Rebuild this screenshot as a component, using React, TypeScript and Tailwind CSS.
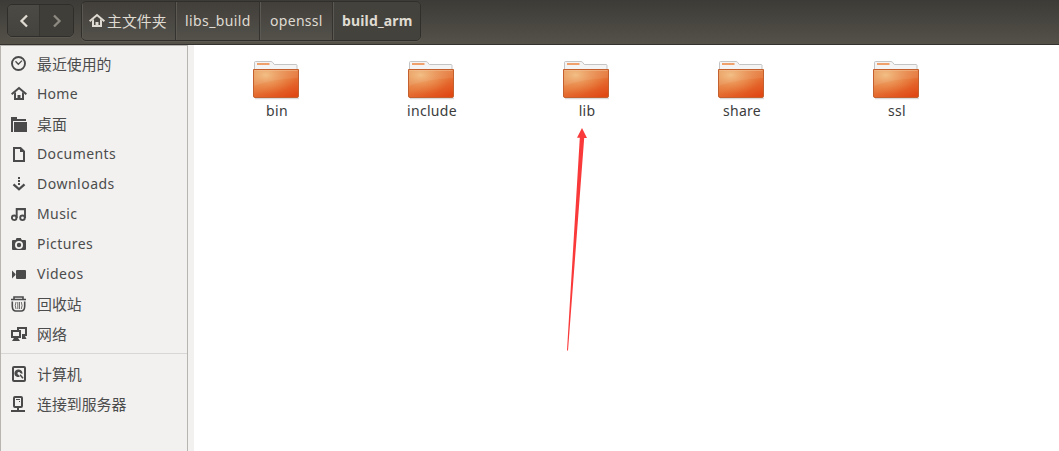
import React from 'react';

const FONT = "font-['Noto_Sans','Noto_Sans_CJK_SC',sans-serif]";

// 16px symbolic icons, drawn with the current text colour
const icons: Record<string, React.ReactNode> = {
    recent: (
        <g fill="none" stroke="currentColor">
            <circle cx="7.5" cy="7.5" r="6.5" strokeWidth="1.9" />
            <path d="M4.5 5.2 7.3 8.3 11 4.6" strokeWidth="1.3" />
        </g>
    ),
    home: (
        <g>
            <path d="M.6 8.3 8 2l7.4 6.3" fill="none" stroke="currentColor" strokeWidth="2" />
            <path d="M3 7.5 5 6v6h1.500V9h3v3H11V6l2 1.500V14H3z" fill="currentColor" />
        </g>
    ),
    desktop: (
        <g fill="currentColor">
            <path d="M0 1h6v2h9v2H2v11H0z" />
            <path d="M3 6h13v10H3z" />
        </g>
    ),
    documents: (
        <g>
            <path d="M3 2h6.5L13 5.5V15H3z" fill="none" stroke="currentColor" strokeWidth="2" />
            <path d="M9 2v4h4z" fill="currentColor" />
        </g>
    ),
    downloads: (
        <g>
            <path d="M7 1h2v2H7zM7 4h2v2H7zM7 7h2v2H7z" fill="currentColor" />
            <path d="m2.5 8.3 5.5 5 5.5-5" fill="none" stroke="currentColor" strokeWidth="2.3" />
        </g>
    ),
    music: (
        <g fill="none" stroke="currentColor" strokeWidth="1.9">
            <circle cx="3.2" cy="11.8" r="2.3" />
            <circle cx="11.5" cy="11.8" r="2.3" />
            <path d="M5.7 12V3H14v9M5.7 3.3h8.2" />
        </g>
    ),
    pictures: (
        <g>
            <path
                fillRule="evenodd"
                d="M5.5 2h4.3l1 2H14q1 0 1 1v8q0 1-1 1H2q-1 0-1-1V5q0-1 1-1h2.7zM8 5a4 4 0 1 0 0 8 4 4 0 0 0 0-8z"
                fill="currentColor"
            />
            <circle cx="8" cy="9" r="2.2" fill="currentColor" />
        </g>
    ),
    videos: (
        <g fill="currentColor">
            <rect x="5" y="4" width="10" height="9" rx="1" />
            <path d="M1 4.5 4.5 8v1L1 12.5z" />
        </g>
    ),
    trash: (
        <g fill="none" stroke="currentColor">
            <path d="M0 3.5h15M3 3.500V1h9v2.500" strokeWidth="1.6" />
            <path d="M1.3 5.5v5q.3 4.500 3.500 4.500h5.400q3.200 0 3.500-4.500v-5" strokeWidth="1.6" />
            <path d="M5 6Q3.500 9.500 5 13M6.800 6v7M8.500 6v7M10.300 6q1.500 3.500 0 7" strokeWidth=".8" />
        </g>
    ),
    network: (
        <g>
            <path d="M7 4V2h8v7h-4" fill="none" stroke="currentColor" strokeWidth="2" />
            <path d="M11 10h3l1.5 3H11z" fill="currentColor" />
            <path d="M1 5h8v6H1z" fill="none" stroke="currentColor" strokeWidth="2" />
            <path d="M3 12h4l2 3H1z" fill="currentColor" />
        </g>
    ),
    computer: (
        <g>
            <rect x="2" y="1" width="12" height="14" rx="1" fill="none" stroke="currentColor" strokeWidth="2" />
            <path fillRule="evenodd" d="M8 3.5a4 3.8 0 1 0 .8 7.3L7.500 8.700A1.400 1.400 0 1 1 9.200 7l2.200 1A4 3.800 0 0 0 8 3.500z" fill="currentColor" />
            <path d="m9 8.8 3 3.5" stroke="currentColor" strokeWidth="1.5" />
        </g>
    ),
    server: (
        <g>
            <rect x="3" y="1" width="8" height="10" rx="1" fill="none" stroke="currentColor" strokeWidth="2" />
            <path d="M5 3h4v1H5zM8 5h1v1H8zM6 11h2v3H6zM0 14h14v2H0z" fill="currentColor" />
        </g>
    ),
};

const Icon: React.FC<{ name: string; className?: string }> = ({ name, className = '' }) => (
    <svg viewBox="0 0 16 16" className={`h-4 w-4 shrink-0 ${className}`}>
        {icons[name]}
    </svg>
);

const places = [
    { icon: 'recent', label: '最近使用的', text: 'text-[14.9px]' },
    { icon: 'home', label: 'Home', text: 'text-[14px] tracking-[0.25px]' },
    { icon: 'desktop', label: '桌面', text: 'text-[14.9px]' },
    { icon: 'documents', label: 'Documents', text: 'text-[14px] tracking-[0.4px]' },
    { icon: 'downloads', label: 'Downloads', text: 'text-[14px] tracking-[0.5px]' },
    { icon: 'music', label: 'Music', text: 'text-[14px] tracking-[0.4px]' },
    { icon: 'pictures', label: 'Pictures', text: 'text-[14px] tracking-[0.45px]' },
    { icon: 'videos', label: 'Videos', text: 'text-[14px] tracking-[0.5px]' },
    { icon: 'trash', label: '回收站', text: 'text-[14.9px]' },
    { icon: 'network', label: '网络', text: 'text-[14.9px]' },
];

const devices = [
    { icon: 'computer', label: '计算机', text: 'text-[14.9px]' },
    { icon: 'server', label: '连接到服务器', text: 'text-[14.9px]' },
];

const folders = ['bin', 'include', 'lib', 'share', 'ssl'];

const PlaceRow: React.FC<{ icon: string; label: string; text: string }> = ({ icon, label, text }) => (
    <li className="flex h-[30px] items-center gap-2.5 pl-2.5">
        <Icon name={icon} className="text-[#4a4a4a]" />
        <span className={`whitespace-nowrap leading-none text-[#4c4c4c] ${text}`}>{label}</span>
    </li>
);

const FolderIcon: React.FC<{ id: string }> = ({ id }) => (
    <svg viewBox="0 0 50 42" className="h-[42px] w-[50px]">
        <defs>
            <linearGradient id={`front-${id}`} x1=".2" y1="0" x2=".8" y2="1">
                <stop offset="0" stopColor="#e58f50" />
                <stop offset=".5" stopColor="#e67437" />
                <stop offset="1" stopColor="#e04814" />
            </linearGradient>
            <radialGradient id={`glow-${id}`} cx=".27" cy=".2" r=".7">
                <stop offset="0" stopColor="#f4c88a" stopOpacity=".8" />
                <stop offset="1" stopColor="#ec9454" stopOpacity="0" />
            </radialGradient>
        </defs>
        <path d="M3 39.5h44" stroke="#000" strokeOpacity=".15" strokeWidth="1.5" />
        <path d="M2.5 12V3.5q0-1 1-1H19q1 0 1.6.8l1.700 2.200H44q1 0 1 1V12z" fill="#f4f4f4" stroke="#c4c4c4" />
        <path d="M5 5h12.5" stroke="#f0a06a" strokeWidth="2" />
        <path d="M1.5 10.5h45V37q0 1.5-1.5 1.5H3q-1.5 0-1.5-1.5z" fill={`url(#front-${id})`} />
        <path d="M1.5 10.5h45V37q0 1.5-1.5 1.5H3q-1.5 0-1.5-1.5z" fill={`url(#glow-${id})`} stroke="#c4602e" />
        <path d="M2 11h44v8Q20 20 2 27z" fill="#fff" fillOpacity=".07" />
        <path d="M2.5 11.5h43" stroke="#f7c59c" strokeOpacity=".45" />
    </svg>
);

const Toolbar: React.FC = () => (
    <header className="flex h-[45px] shrink-0 items-start border-b border-[#33322e] bg-linear-to-b from-[#3c3b37] to-[#545149] pl-[7px] text-[#dfdbd2]">
        <div className="mt-1 flex h-[33px] w-[67px] overflow-hidden rounded-[5px] border border-[#2f2e2a] shadow-[0_1px_0_#5b5850]">
            <button className="flex w-[31px] items-center justify-center bg-linear-to-b from-[#4c4a44] to-[#45433d]">
                <svg viewBox="0 0 10 14" className="h-3.5 w-2.5">
                    <path d="M8 1.5 2.5 7 8 12.5" fill="none" stroke="currentColor" strokeWidth="2.3" />
                </svg>
            </button>
            <button className="flex flex-1 items-center justify-center border-l border-[#37352f] bg-[#403e39] text-[#8d8a82]">
                <svg viewBox="0 0 10 14" className="h-3.5 w-2.5">
                    <path d="M2 1.5 7.5 7 2 12.5" fill="none" stroke="currentColor" strokeWidth="2.3" />
                </svg>
            </button>
        </div>
        <nav className="ml-[7px] mt-px flex h-10 w-[340px] overflow-hidden rounded-[5px] border border-[#302f2b] bg-linear-to-b from-[#423f3b] to-[#53514a] text-[14px] leading-none shadow-[0_1px_0_#5d5a52]">
            <div className="flex w-[93px] items-center border-l border-[#5a5750] pl-[6px] text-[14.9px]">
                <Icon name="home" />
                <span className="ml-0.5 whitespace-nowrap">主文件夹</span>
            </div>
            <div className="flex w-[84px] items-center border-l border-[#35332f] pl-[9px] tracking-[0.4px] shadow-[inset_1px_0_0_#5c5952]">
                libs_build
            </div>
            <div className="flex w-[73px] items-center border-l border-[#35332f] pl-[10px] tracking-[0.3px] shadow-[inset_1px_0_0_#5c5952]">
                openssl
            </div>
            <div className="flex flex-1 items-center border-l border-[#35332f] bg-[#44423c] pl-[9px] font-bold tracking-[0.15px] shadow-[inset_1px_0_0_#5c5952]">
                build_arm
            </div>
        </nav>
    </header>
);

const Sidebar: React.FC = () => (
    <aside className="w-[188px] shrink-0 border-x border-t border-[#b8b5b0] bg-[#f2f1f0] pt-[3px]">
        <ul>
            {places.map((p) => (
                <PlaceRow key={p.label} {...p} />
            ))}
        </ul>
        <div className="mb-[5px] mt-1 h-px bg-[#d9d7d5]" />
        <ul>
            {devices.map((d) => (
                <PlaceRow key={d.label} {...d} />
            ))}
        </ul>
    </aside>
);

const App: React.FC = () => (
    <div className={`relative flex h-[451px] w-[1059px] flex-col overflow-hidden bg-white ${FONT}`}>
        <Toolbar />
        <div className="flex min-h-0 flex-1">
            <Sidebar />
            <div className="w-1.5 shrink-0 bg-[#f2f1f0]" />
            <main className="flex flex-1 items-start pl-[5px] pt-3.5">
                {folders.map((name) => (
                    <div key={name} className="flex w-[155px] flex-col items-center">
                        <FolderIcon id={name} />
                        <span className="mt-[3px] pl-px text-[14px] leading-[14px] tracking-[0.3px] text-[#3c3c3c]">{name}</span>
                    </div>
                ))}
            </main>
        </div>
        {/* Pointer arrow under the lib folder */}
        <svg viewBox="0 0 24 224" className="pointer-events-none absolute left-[565px] top-[127px] h-[224px] w-6">
            <path d="M17 1 22 11H19.2L3 223.5H2L14.8 10.8H12z" fill="#fa3a3a" />
        </svg>
    </div>
);

export default App;
